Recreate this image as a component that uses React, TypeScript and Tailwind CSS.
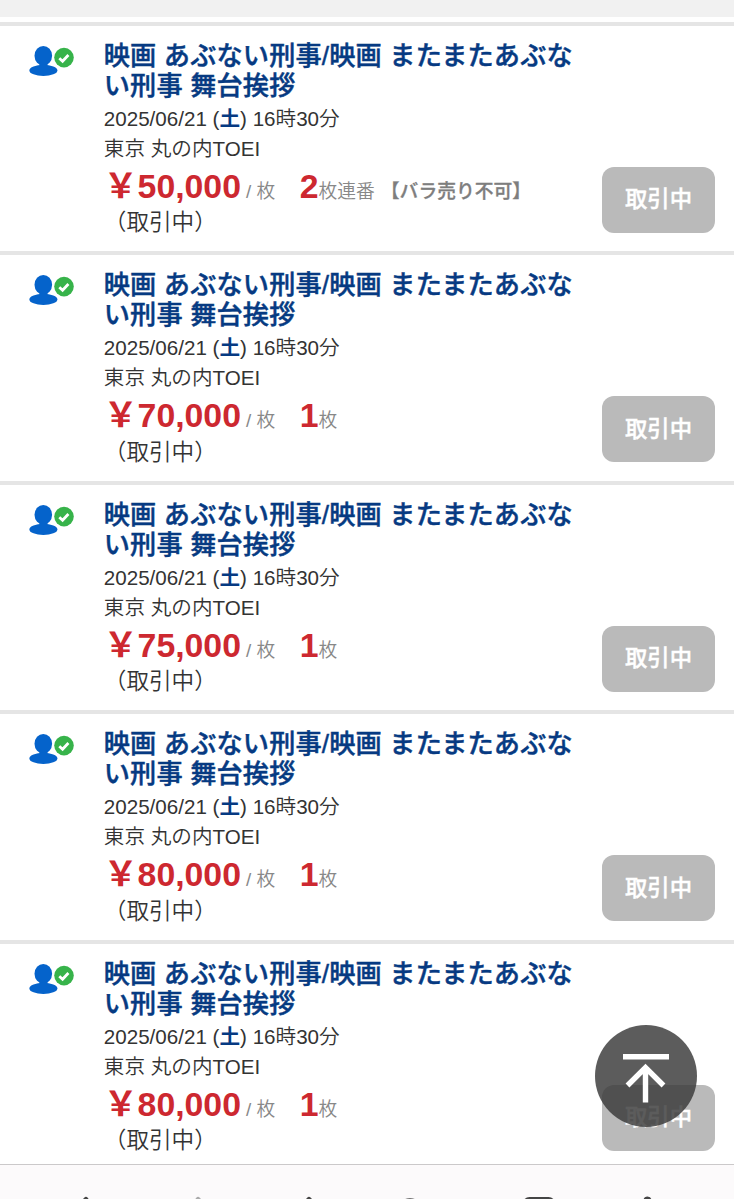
type Ticket = { price: string; count: number; unit: string; note?: string };

const tickets: Ticket[] = [
  { price: "50,000", count: 2, unit: "枚連番", note: "【バラ売り不可】" },
  { price: "70,000", count: 1, unit: "枚" },
  { price: "75,000", count: 1, unit: "枚" },
  { price: "80,000", count: 1, unit: "枚" },
  { price: "80,000", count: 1, unit: "枚" },
];

function VerifiedUser() {
  return (
    <svg className="ml-[29px] mt-[19px] h-[34px] w-[46px] shrink-0" viewBox="0 0 46 34">
      <ellipse cx="14.3" cy="10.8" rx="8.8" ry="9.8" fill="#0563cb" />
      <path d="M10.5 17h8v5h-8z" fill="#0563cb" />
      <ellipse cx="14.4" cy="25.4" rx="14" ry="5.6" fill="#0563cb" />
      <circle cx="35" cy="12.6" r="9.8" fill="#37b34a" />
      <path d="M30.3 13.2l3.3 3 5.8-6.2" fill="none" stroke="#fff" strokeWidth="2.8" />
    </svg>
  );
}

function TicketRow({ price, count, unit, note }: Ticket) {
  return (
    <li className="flex h-[229.5px] shrink-0 border-b-4 border-[#e5e5e5] bg-white">
      <VerifiedUser />
      <div className="ml-[28.8px] flex w-[480px] shrink-0 flex-col whitespace-nowrap pt-[15.3px] text-[#333]">
        <h2 className="h-[62.7px] text-[26.2px] font-medium leading-[30px] tracking-[0.14px] text-[#063a82] [-webkit-text-stroke:0.45px_#063a82]">
          映画 あぶない刑事/映画 またまたあぶな
          <br />
          い刑事 舞台挨拶
        </h2>
        <p className="h-[30px] text-[20.6px] font-[350] leading-[30px]">
          2025/06/21 (<b className="font-bold text-[#063a82]">土</b>) 16時30分
        </p>
        <p className="h-[30px] text-[20.6px] font-[350] leading-[30px]">東京 丸の内TOEI</p>
        <p className="flex h-[44px] items-baseline text-[18.8px] font-[350] leading-[44px] text-[#888]">
          <b className="text-[33.8px] font-bold text-[#cd2830]">￥{price}</b>
          <span className="ml-[5px]">/ 枚</span>
          <b className="ml-[24.5px] text-[33.8px] font-bold text-[#cd2830]">{count}</b>
          <span>{unit}</span>
          {note && <b className="ml-[6px] font-medium text-[#7e7e7e] [-webkit-text-stroke:0.3px_#7e7e7e]">{note}</b>}
        </p>
        <p className="h-[30px] pt-[0.7px] text-[22.6px] font-[350] leading-[30px]">（取引中）</p>
      </div>
      <div className="ml-auto mr-[19px] mt-[141px] flex h-[66px] w-[113px] items-center justify-center rounded-[12px] bg-[#bababa] pt-px text-[22.4px] font-medium text-white [-webkit-text-stroke:0.4px_#fff]">
        取引中
      </div>
    </li>
  );
}

export default function App() {
  return (
    <div className="relative flex h-[1199px] w-[734px] flex-col overflow-hidden bg-white font-['Liberation_Sans','Noto_Sans_CJK_JP',sans-serif]">
      <div className="h-[17px] shrink-0 bg-[#f1f1f1]" />
      <div className="mt-[4.7px] h-1 shrink-0 bg-[#e5e5e5]" />
      <ul className="flex h-[1138.3px] shrink-0 flex-col overflow-hidden">
        {tickets.map((t, i) => (
          <TicketRow key={i} {...t} />
        ))}
      </ul>
      <footer className="flex flex-1 border-t border-[#cbc9ca] bg-[#fcfafb]">
        <svg className="h-[36px] w-[734px]" viewBox="0 0 734 36" fill="none" stroke="#454545" strokeWidth="5" strokeLinecap="round" strokeLinejoin="round">
          <path d="M86 34.5L76 45L86 55" />
          <path d="M198 34.5L208 45L198 55" stroke="#aaa" />
          <path d="M309 34.5V55M301 43L309 34.5L317 43" />
          <path d="M398 50Q399 34.7 410 34.7T422 50" strokeWidth="3" />
          <rect x="524.5" y="34" width="29" height="28" rx="5" strokeWidth="4" />
          <circle cx="647.5" cy="35.5" r="2.5" strokeWidth="3" />
        </svg>
      </footer>
      <button aria-label="ページの先頭へ" className="absolute left-[594.5px] top-[1025px] h-[102px] w-[102px] rounded-full bg-[#383838]/82">
        <svg viewBox="0 0 102 102" className="h-full w-full" fill="none" stroke="#fff" strokeWidth="5.4">
          <path d="M28 31.8h46M50.5 77.5V43M32.5 60.5l18-18 18 18" />
        </svg>
      </button>
    </div>
  );
}
